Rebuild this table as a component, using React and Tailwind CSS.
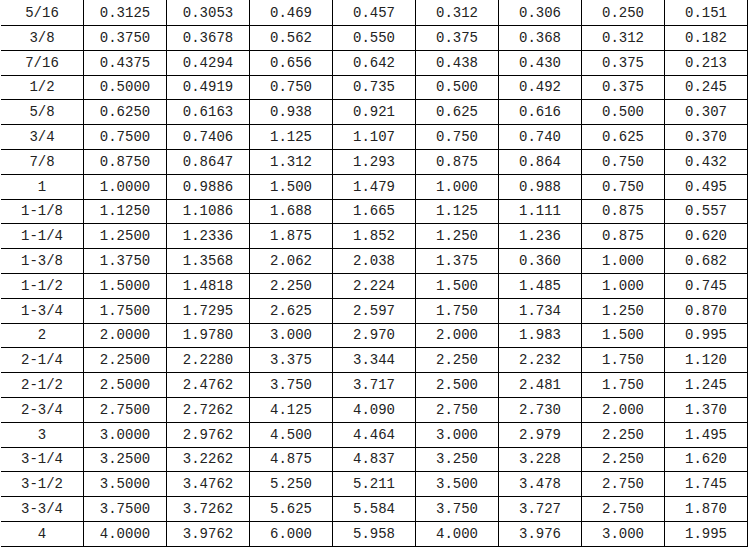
const rows = [
  ["5/16", "0.3125", "0.3053", "0.469", "0.457", "0.312", "0.306", "0.250", "0.151"],
  ["3/8", "0.3750", "0.3678", "0.562", "0.550", "0.375", "0.368", "0.312", "0.182"],
  ["7/16", "0.4375", "0.4294", "0.656", "0.642", "0.438", "0.430", "0.375", "0.213"],
  ["1/2", "0.5000", "0.4919", "0.750", "0.735", "0.500", "0.492", "0.375", "0.245"],
  ["5/8", "0.6250", "0.6163", "0.938", "0.921", "0.625", "0.616", "0.500", "0.307"],
  ["3/4", "0.7500", "0.7406", "1.125", "1.107", "0.750", "0.740", "0.625", "0.370"],
  ["7/8", "0.8750", "0.8647", "1.312", "1.293", "0.875", "0.864", "0.750", "0.432"],
  ["1", "1.0000", "0.9886", "1.500", "1.479", "1.000", "0.988", "0.750", "0.495"],
  ["1-1/8", "1.1250", "1.1086", "1.688", "1.665", "1.125", "1.111", "0.875", "0.557"],
  ["1-1/4", "1.2500", "1.2336", "1.875", "1.852", "1.250", "1.236", "0.875", "0.620"],
  ["1-3/8", "1.3750", "1.3568", "2.062", "2.038", "1.375", "0.360", "1.000", "0.682"],
  ["1-1/2", "1.5000", "1.4818", "2.250", "2.224", "1.500", "1.485", "1.000", "0.745"],
  ["1-3/4", "1.7500", "1.7295", "2.625", "2.597", "1.750", "1.734", "1.250", "0.870"],
  ["2", "2.0000", "1.9780", "3.000", "2.970", "2.000", "1.983", "1.500", "0.995"],
  ["2-1/4", "2.2500", "2.2280", "3.375", "3.344", "2.250", "2.232", "1.750", "1.120"],
  ["2-1/2", "2.5000", "2.4762", "3.750", "3.717", "2.500", "2.481", "1.750", "1.245"],
  ["2-3/4", "2.7500", "2.7262", "4.125", "4.090", "2.750", "2.730", "2.000", "1.370"],
  ["3", "3.0000", "2.9762", "4.500", "4.464", "3.000", "2.979", "2.250", "1.495"],
  ["3-1/4", "3.2500", "3.2262", "4.875", "4.837", "3.250", "3.228", "2.250", "1.620"],
  ["3-1/2", "3.5000", "3.4762", "5.250", "5.211", "3.500", "3.478", "2.750", "1.745"],
  ["3-3/4", "3.7500", "3.7262", "5.625", "5.584", "3.750", "3.727", "2.750", "1.870"],
  ["4", "4.0000", "3.9762", "6.000", "5.958", "4.000", "3.976", "3.000", "1.995"],
];

export default function App() {
  return (
    <div className="w-[748px] h-[547px] bg-white overflow-hidden pl-px text-[#222] text-[14px]" style={{ fontFamily: '"Liberation Mono", "DejaVu Sans Mono", monospace' }}>
      {rows.map((row, i) => (
        <div key={i} className={`flex border-b border-black ${i === 0 ? "h-[26px]" : "h-[24.8px]"}`}>
          {row.map((cell, j) => (
            <div key={j} className="w-[83px] shrink-0 border-r border-black flex items-center justify-center leading-none">
              {cell}
            </div>
          ))}
        </div>
      ))}
    </div>
  );
}
